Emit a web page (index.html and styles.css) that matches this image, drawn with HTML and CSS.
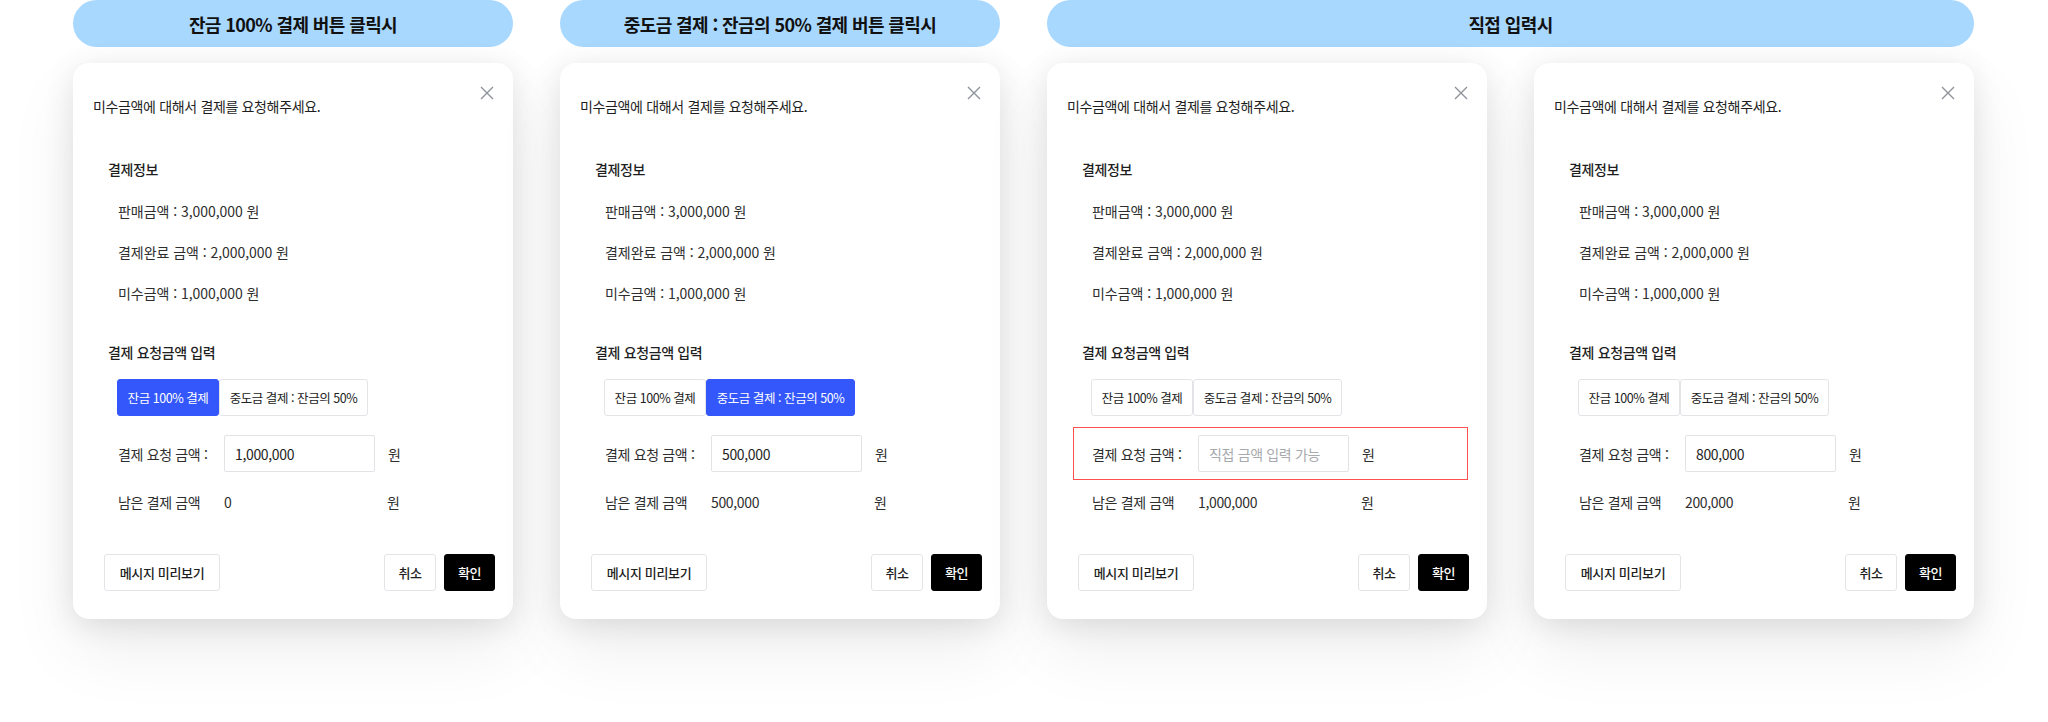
FILE: index.html
```html
<!DOCTYPE html>
<html lang="ko">
<head>
<meta charset="utf-8">
<title>결제 요청</title>
<link rel="stylesheet" href="styles.css">
</head>
<body>
<div class="page">
  <section class="group">
    <div class="pill">잔금 100% 결제 버튼 클릭시</div>
    <div class="cards">
      <div class="card">
        <button class="close" aria-label="닫기"><svg viewBox="0 0 14 14" width="14" height="14"><path d="M1 1L13 13M13 1L1 13" stroke="#8e939b" stroke-width="1.4" fill="none"/></svg></button>
        <p class="title">미수금액에 대해서 결제를 요청해주세요.</p>
        <h3 class="sec sec-info">결제정보</h3>
        <ul class="info">
          <li>판매금액 : 3,000,000 원</li>
          <li>결제완료 금액 : 2,000,000 원</li>
          <li>미수금액 : 1,000,000 원</li>
        </ul>
        <h3 class="sec sec-req">결제 요청금액 입력</h3>
        <div class="toggle">
          <span class="tbtn tbtn-a active">잔금 100% 결제</span>
          <span class="tbtn tbtn-b">중도금 결제 : 잔금의 50%</span>
        </div>
        <div class="req">
          <span class="lbl">결제 요청 금액 :</span>
          <span class="field">1,000,000</span>
          <span class="won">원</span>
        </div>
        <div class="rest">
          <span class="lbl">남은 결제 금액</span>
          <span class="val">0</span>
          <span class="won">원</span>
        </div>
        <div class="footer">
          <span class="btn">메시지 미리보기</span>
          <span class="spacer"></span>
          <span class="btn btn-sm">취소</span>
          <span class="btn btn-sm btn-dark">확인</span>
        </div>
      </div>
    </div>
  </section>

  <section class="group">
    <div class="pill">중도금 결제 : 잔금의 50% 결제 버튼 클릭시</div>
    <div class="cards">
      <div class="card">
        <button class="close" aria-label="닫기"><svg viewBox="0 0 14 14" width="14" height="14"><path d="M1 1L13 13M13 1L1 13" stroke="#8e939b" stroke-width="1.4" fill="none"/></svg></button>
        <p class="title">미수금액에 대해서 결제를 요청해주세요.</p>
        <h3 class="sec sec-info">결제정보</h3>
        <ul class="info">
          <li>판매금액 : 3,000,000 원</li>
          <li>결제완료 금액 : 2,000,000 원</li>
          <li>미수금액 : 1,000,000 원</li>
        </ul>
        <h3 class="sec sec-req">결제 요청금액 입력</h3>
        <div class="toggle">
          <span class="tbtn tbtn-a">잔금 100% 결제</span>
          <span class="tbtn tbtn-b active">중도금 결제 : 잔금의 50%</span>
        </div>
        <div class="req">
          <span class="lbl">결제 요청 금액 :</span>
          <span class="field">500,000</span>
          <span class="won">원</span>
        </div>
        <div class="rest">
          <span class="lbl">남은 결제 금액</span>
          <span class="val">500,000</span>
          <span class="won">원</span>
        </div>
        <div class="footer">
          <span class="btn">메시지 미리보기</span>
          <span class="spacer"></span>
          <span class="btn btn-sm">취소</span>
          <span class="btn btn-sm btn-dark">확인</span>
        </div>
      </div>
    </div>
  </section>

  <section class="group">
    <div class="pill">직접 입력시</div>
    <div class="cards">
      <div class="card">
        <button class="close" aria-label="닫기"><svg viewBox="0 0 14 14" width="14" height="14"><path d="M1 1L13 13M13 1L1 13" stroke="#8e939b" stroke-width="1.4" fill="none"/></svg></button>
        <p class="title">미수금액에 대해서 결제를 요청해주세요.</p>
        <h3 class="sec sec-info">결제정보</h3>
        <ul class="info">
          <li>판매금액 : 3,000,000 원</li>
          <li>결제완료 금액 : 2,000,000 원</li>
          <li>미수금액 : 1,000,000 원</li>
        </ul>
        <h3 class="sec sec-req">결제 요청금액 입력</h3>
        <div class="toggle">
          <span class="tbtn tbtn-a">잔금 100% 결제</span>
          <span class="tbtn tbtn-b">중도금 결제 : 잔금의 50%</span>
        </div>
        <div class="req req-hl">
          <span class="lbl">결제 요청 금액 :</span>
          <span class="field placeholder">직접 금액 입력 가능</span>
          <span class="won">원</span>
        </div>
        <div class="rest">
          <span class="lbl">남은 결제 금액</span>
          <span class="val">1,000,000</span>
          <span class="won">원</span>
        </div>
        <div class="footer">
          <span class="btn">메시지 미리보기</span>
          <span class="spacer"></span>
          <span class="btn btn-sm">취소</span>
          <span class="btn btn-sm btn-dark">확인</span>
        </div>
      </div>

      <div class="card">
        <button class="close" aria-label="닫기"><svg viewBox="0 0 14 14" width="14" height="14"><path d="M1 1L13 13M13 1L1 13" stroke="#8e939b" stroke-width="1.4" fill="none"/></svg></button>
        <p class="title">미수금액에 대해서 결제를 요청해주세요.</p>
        <h3 class="sec sec-info">결제정보</h3>
        <ul class="info">
          <li>판매금액 : 3,000,000 원</li>
          <li>결제완료 금액 : 2,000,000 원</li>
          <li>미수금액 : 1,000,000 원</li>
        </ul>
        <h3 class="sec sec-req">결제 요청금액 입력</h3>
        <div class="toggle">
          <span class="tbtn tbtn-a">잔금 100% 결제</span>
          <span class="tbtn tbtn-b">중도금 결제 : 잔금의 50%</span>
        </div>
        <div class="req">
          <span class="lbl">결제 요청 금액 :</span>
          <span class="field">800,000</span>
          <span class="won">원</span>
        </div>
        <div class="rest">
          <span class="lbl">남은 결제 금액</span>
          <span class="val">200,000</span>
          <span class="won">원</span>
        </div>
        <div class="footer">
          <span class="btn">메시지 미리보기</span>
          <span class="spacer"></span>
          <span class="btn btn-sm">취소</span>
          <span class="btn btn-sm btn-dark">확인</span>
        </div>
      </div>
    </div>
  </section>
</div>
</body>
</html>
```

FILE: styles.css
```css
* { box-sizing: border-box; }

html, body {
  margin: 0;
  padding: 0;
  background: #ffffff;
}

body {
  font-family: "Noto Sans CJK KR", "Noto Sans", sans-serif;
  color: #2b2b2b;
  width: 2048px;
  height: 722px;
  overflow: hidden;
}

.page {
  display: flex;
  gap: 47px;
  padding-left: 73px;
}

.group {
  display: flex;
  flex-direction: column;
  gap: 16px;
}

.pill {
  height: 47px;
  border-radius: 24px;
  background: #a9d8ff;
  display: flex;
  align-items: center;
  justify-content: center;
  font-size: 18px;
  font-weight: 700;
  letter-spacing: -0.6px;
  color: #111;
}

.cards {
  display: flex;
  gap: 47px;
}

.card {
  position: relative;
  width: 440px;
  height: 556px;
  background: #fff;
  border-radius: 16px;
  padding: 0 18px 28px 20px;
  box-shadow: 0 6px 30px rgba(0, 0, 0, 0.10), 0 30px 70px rgba(0, 0, 0, 0.07);
  display: flex;
  flex-direction: column;
  font-size: 14px;
  letter-spacing: -0.35px;
}

.close {
  position: absolute;
  top: 23px;
  right: 19px;
  width: 14px;
  height: 14px;
  padding: 0;
  border: 0;
  background: none;
  display: block;
}
.close svg { display: block; }

.title {
  margin: 33px 0 0;
  line-height: 20px;
  color: #1e1e1e;
}

.sec {
  margin: 0;
  font-size: 14px;
  font-weight: 500;
  line-height: 20px;
  color: #1e1e1e;
  padding-left: 15px;
}
.sec-info { margin-top: 43px; }
.sec-req { margin-top: 39px; }

.info {
  list-style: none;
  margin: 22px 0 0;
  padding: 0 0 0 25px;
  display: flex;
  flex-direction: column;
  gap: 21px;
  color: #2e2e2e;
  letter-spacing: -0.05px;
}
.info li { line-height: 20px; }

.toggle {
  display: flex;
  margin: 17px 0 0 24px;
}
.tbtn {
  height: 37px;
  display: flex;
  align-items: center;
  justify-content: center;
  border: 1px solid #e3e4e8;
  border-radius: 3px;
  font-size: 12.5px;
  letter-spacing: -0.45px;
  color: #222;
  background: #fff;
}
.tbtn-a { width: 102px; }
.tbtn-b { width: 149px; }
.tbtn.active {
  background: #3357fb;
  border-color: #3357fb;
  color: #fff;
}

.req {
  margin: 11px 0 0 6px;
  width: 395px;
  height: 53px;
  border: 1px solid transparent;
  padding: 0 0 0 18px;
  display: grid;
  grid-template-columns: 106px 151px auto;
  align-items: center;
  color: #2e2e2e;
}
.req .won { margin-left: 13px; }
.req-hl { border-color: #ff4f4f; }

.field {
  height: 37px;
  border: 1px solid #e2e3e6;
  border-radius: 2px;
  padding-left: 10px;
  display: flex;
  align-items: center;
  font-size: 14px;
  color: #1e1e1e;
}
.field.placeholder { color: #a7a9ad; }

.rest {
  margin: 12px 0 0 25px;
  line-height: 20px;
  display: grid;
  grid-template-columns: 106px 163px auto;
  color: #2e2e2e;
}

.footer {
  margin: 42px 0 0 11px;
  display: flex;
  gap: 8px;
}
.spacer { flex: 1; }
.btn {
  height: 37px;
  min-width: 116px;
  display: flex;
  align-items: center;
  justify-content: center;
  border: 1px solid #e3e4e8;
  border-radius: 3px;
  font-size: 13px;
  font-weight: 500;
  color: #1e1e1e;
  background: #fff;
}
.btn-sm { min-width: 52px; width: 52px; }
.btn-dark {
  background: #000;
  border-color: #000;
  color: #fff;
  width: 51px;
  min-width: 51px;
}
```
